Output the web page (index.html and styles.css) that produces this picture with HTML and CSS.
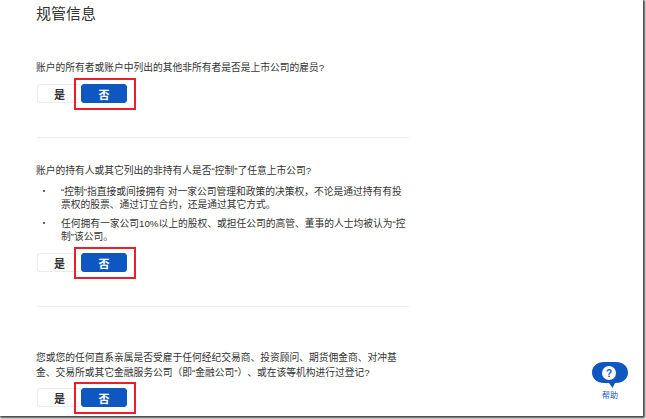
FILE: index.html
```html
<!DOCTYPE html>
<html lang="zh-CN">
<head>
  <meta charset="UTF-8" />
  <title>规管信息</title>
  <link rel="stylesheet" href="styles.css">
</head>
<body>
  <div class="page">
    <div class="content">
      <h1 class="page-title">规管信息</h1>

      <!-- Question 1 -->
      <div class="question first">
        <p class="question-text">账户的所有者或账户中列出的其他非所有者是否是上市公司的雇员?</p>
        <div class="answer">
          <button class="btn btn-yes">是</button><button class="btn btn-no">否</button>
        </div>
      </div>

      <!-- Question 2 -->
      <div class="question second">
        <p class="question-text">账户的持有人或其它列出的非持有人是否“控制”了任意上市公司?</p>
        <ul class="notes">
          <li>“控制”指直接或间接拥有 对一家公司管理和政策的决策权，不论是通过持有有投票权的股票、通过订立合约，还是通过其它方式。</li>
          <li>任何拥有一家公司10%以上的股权、或担任公司的高管、董事的人士均被认为“控制”该公司。</li>
        </ul>
        <div class="answer">
          <button class="btn btn-yes">是</button><button class="btn btn-no">否</button>
        </div>
      </div>

      <!-- Question 3 -->
      <div class="question third">
        <p class="question-text">您或您的任何直系亲属是否受雇于任何经纪交易商、投资顾问、期货佣金商、对冲基金、交易所或其它金融服务公司（即“金融公司”）、或在该等机构进行过登记?</p>
        <div class="answer">
          <button class="btn btn-yes">是</button><button class="btn btn-no">否</button>
        </div>
      </div>
    </div>

    <!-- Help bubble -->
    <div class="help">
      <svg class="help-icon" width="36" height="27" viewBox="0 0 36 27">
        <path d="M12 0h12c7 0 12 4.500 12 10.500S31 21 24 21h-1l-2.500 5L17 21h-5C5 21 0 16.500 0 10.500S5 0 12 0z" fill="#0f57c0"/>
        <circle cx="17" cy="11" r="7" fill="#fff"/>
        <text x="17" y="14.500" text-anchor="middle" class="help-mark">?</text>
      </svg>
      <span class="help-label">帮助</span>
    </div>
  </div>
</body>
</html>
```

FILE: styles.css
```css
* {
  box-sizing: border-box;
  margin: 0;
  padding: 0;
}

html, body {
  width: 646px;
  height: 419px;
  overflow: hidden;
  background-color: #fff;
}

body {
  font-family: "Liberation Sans", "Noto Sans CJK SC", sans-serif;
  color: #333;
  text-spacing-trim: space-all;
}

/* screenshot frame: dark shadow along right and bottom */
.page {
  position: relative;
  width: 643px;
  height: 416px;
  background-color: #fff;
  box-shadow: 1px 1px 2px 1px #444;
}

.content {
  width: 373px;
  margin-left: 36px;
}

.page-title {
  font-size: 15px;
  font-weight: 400;
  line-height: 20px;
  padding-top: 4px;
  height: 24px;
  color: #333;
}

.first {
  padding-top: 36px;
  padding-bottom: 34px;
  border-bottom: 1px solid #eee;
}

.second {
  padding-top: 25px;
  padding-bottom: 34px;
  border-bottom: 1px solid #eee;
}

.third {
  padding-top: 43px;
}

.first, .second {
  margin-left: 1px;
}

.first .question-text, .second .question-text {
  margin-left: -1px;
}

.question-text {
  font-size: 9.75px;
  line-height: 15px;
  margin-bottom: 9px;
}

.third .question-text {
  margin-bottom: 8px;
}

.notes {
  list-style: none;
  margin-top: -2px;
  margin-bottom: 10px;
}

.notes li {
  position: relative;
  font-size: 9.75px;
  line-height: 13px;
  padding-left: 24px;
  margin-bottom: 6px;
}

.notes li:last-child {
  margin-bottom: 0;
}

.notes li::before {
  content: "";
  position: absolute;
  left: 6px;
  top: 5px;
  width: 2px;
  height: 2px;
  border-radius: 50%;
  background-color: #333;
}

.answer {
  position: relative;
  display: flex;
  height: 19px;
}

.third .answer {
  margin-left: 1px;
}

/* red annotation box round the selected answer */
.answer::after {
  content: "";
  box-sizing: border-box;
  position: absolute;
  left: 37px;
  top: -6px;
  width: 62px;
  height: 32px;
  border: 2px solid #e8202c;
}

.btn {
  height: 19px;
  font-family: inherit;
  font-size: 11px;
  font-weight: 700;
  border-radius: 3px;
  border: 1px solid #ececec;
}

.btn-yes {
  width: 44px;
  background-color: #fff;
  color: #333;
  border-right: none;
}

.btn-no {
  width: 46px;
  background-color: #0f57c0;
  border-color: #0f57c0;
  color: #fff;
}

.help {
  position: absolute;
  left: 592px;
  top: 362px;
  width: 36px;
  display: flex;
  flex-direction: column;
  align-items: center;
}

.help-icon {
  display: block;
}

.help-mark {
  font-size: 10px;
  font-weight: 700;
  fill: #0f57c0;
}

.help-label {
  font-size: 8px;
  line-height: 14px;
  color: #0f57c0;
}
```
